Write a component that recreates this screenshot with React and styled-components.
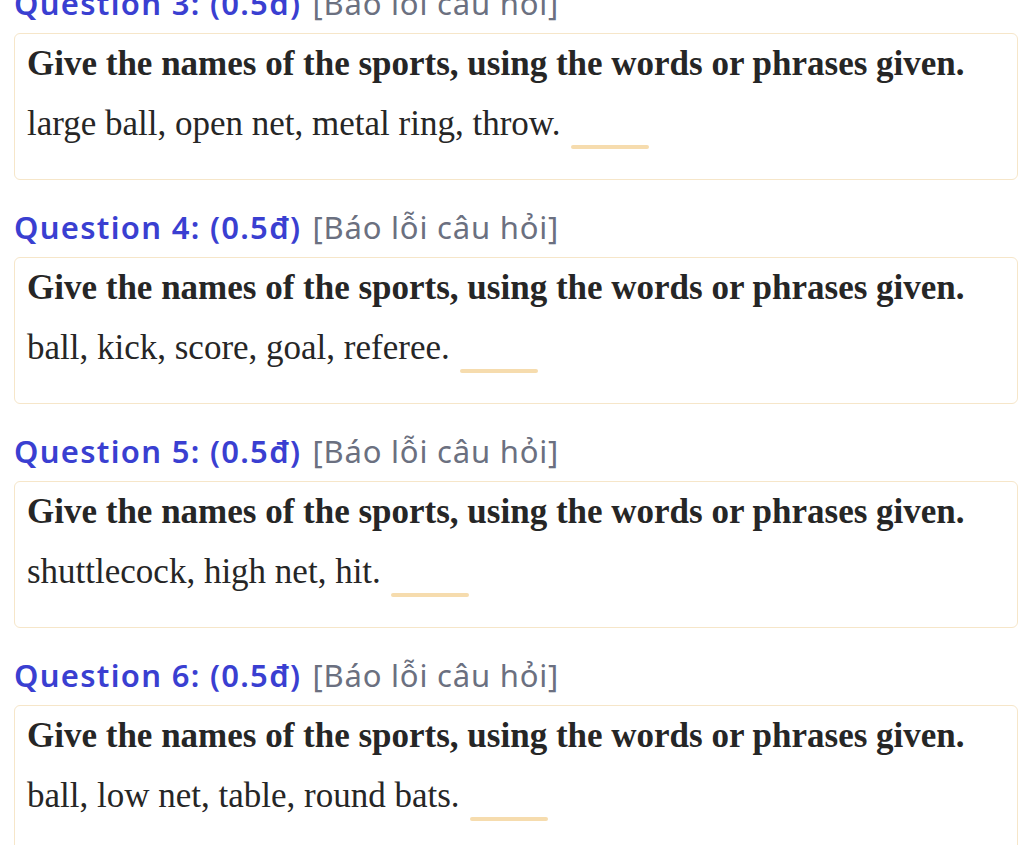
import styled, { createGlobalStyle } from "styled-components";

const GlobalStyle = createGlobalStyle`
  html, body {
    margin: 0;
    padding: 0;
    background: #ffffff;
  }
`;

const questions = [
  { num: 3, words: "large ball, open net, metal ring, throw." },
  { num: 4, words: "ball, kick, score, goal, referee." },
  { num: 5, words: "shuttlecock, high net, hit." },
  { num: 6, words: "ball, low net, table, round bats." },
];

function App() {
  return (
    <>
      <GlobalStyle />
      <Page>
        {questions.map((q) => (
          <Block key={q.num}>
            <Heading>
              <Label>Question {q.num}: (0.5đ)</Label> <Report>[Báo lỗi câu hỏi]</Report>
            </Heading>
            <Card>
              <Prompt>Give the names of the sports, using the words or phrases given.</Prompt>
              <Words>
                {q.words}
                <Blank />
              </Words>
            </Card>
          </Block>
        ))}
      </Page>
    </>
  );
}
export default App;

const Page = styled.div`
  margin-top: -17px;
  padding: 0 6px 0 14px;
  height: 862px;
  overflow: hidden;
`;

const Block = styled.section`
  margin-bottom: 27px;
`;

const Heading = styled.div`
  height: 40px;
  line-height: 40px;
  margin-bottom: 10px;
  font-family: "Noto Sans", "Open Sans", sans-serif;
  font-size: 31px;
  white-space: nowrap;
`;

const Label = styled.span`
  color: #3a3fd1;
  font-weight: 600;
  letter-spacing: 1.3px;
  margin-right: 3px;
`;

const Report = styled.span`
  color: #6b7080;
  font-weight: 400;
  letter-spacing: 0.8px;
`;

const Card = styled.div`
  border: 1px solid #f6e6c9;
  border-radius: 6px;
  padding: 6px 12px 30px;
  background: #ffffff;
  font-family: "Liberation Serif", "Times New Roman", serif;
  font-size: 35px;
  color: #262626;
`;

const Prompt = styled.p`
  margin: 0 0 12px;
  line-height: 48px;
  font-weight: 700;
  white-space: nowrap;
`;

const Words = styled.p`
  margin: 0;
  line-height: 48px;
`;

const Blank = styled.span`
  display: inline-block;
  width: 78px;
  height: 4px;
  margin-left: 10px;
  vertical-align: -14px;
  background: #f6dcae;
  border-radius: 2px;
`;
